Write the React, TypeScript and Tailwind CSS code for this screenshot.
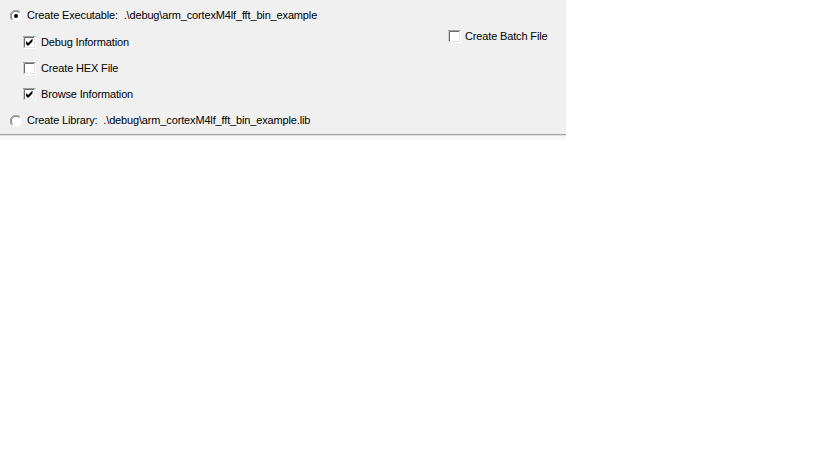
function Check({ on }: { on?: boolean }) {
  return (
    <svg width="13" height="13" viewBox="0 0 13 13" className="shrink-0">
      <rect x="0" y="0" width="13" height="13" fill="#ffffff" />
      <path d="M0 12.5V0.5H12.5" stroke="#a0a0a0" strokeWidth="1" fill="none" />
      <path d="M1.5 11V1.5H11" stroke="#696969" strokeWidth="1" fill="none" />
      <path d="M1 11.5H11.5V1" stroke="#e3e3e3" strokeWidth="1" fill="none" />
      {on && <path d="M3 5L5 7L9.5 2.5V5.5L5 10L3 8Z" fill="#000" />}
    </svg>
  );
}

function Radio({ on }: { on?: boolean }) {
  return (
    <svg width="12" height="12" viewBox="0 0 12 12" className="shrink-0">
      <circle cx="6" cy="6" r="5.5" fill="#ffffff" />
      <path d="M1.8 10.2A5.5 5.5 0 0 1 10.2 1.8" stroke="#a0a0a0" strokeWidth="1" fill="none" />
      <path d="M2.6 9.4A4.5 4.5 0 0 1 9.4 2.6" stroke="#696969" strokeWidth="1" fill="none" />
      <path d="M10.2 1.8A5.5 5.5 0 0 1 1.8 10.2" stroke="#f5f5f5" strokeWidth="1" fill="none" />
      {on && <circle cx="6" cy="6" r="2" fill="#000" />}
    </svg>
  );
}

export default function App() {
  return (
    <div
      className="w-[819px] h-[460px] bg-white text-[11px] tracking-[-0.15px] text-black"
      style={{ fontFamily: '"Liberation Sans", Arial, sans-serif' }}
    >
      <div className="w-[566px] bg-[#f0f0f0] border-b border-[#a0a0a0] flex pl-[10px] pt-[2px]">
        <div className="w-[438px] flex flex-col">
          <div className="h-[27px] flex items-center gap-[5px]">
            <Radio on />
            <span className="whitespace-pre">Create Executable:  .\debug\arm_cortexM4lf_fft_bin_example</span>
          </div>
          <div className="h-[26px] flex items-center gap-[5px] pl-[13px]">
            <Check on />
            <span>Debug Information</span>
          </div>
          <div className="h-[26px] flex items-center gap-[5px] pl-[13px]">
            <Check />
            <span>Create HEX File</span>
          </div>
          <div className="h-[26px] flex items-center gap-[5px] pl-[13px]">
            <Check on />
            <span>Browse Information</span>
          </div>
          <div className="h-[27px] flex items-center gap-[5px]">
            <Radio />
            <span className="whitespace-pre">Create Library:  .\debug\arm_cortexM4lf_fft_bin_example.lib</span>
          </div>
        </div>
        <div className="pt-[26px]">
          <div className="flex items-center gap-[4px]">
            <Check />
            <span>Create Batch File</span>
          </div>
        </div>
      </div>
      <div className="w-[566px] h-[1px] bg-[#e3e3e3]" />
      <div className="w-[566px] h-[4px] bg-[#f8f8f8]" />
    </div>
  );
}
